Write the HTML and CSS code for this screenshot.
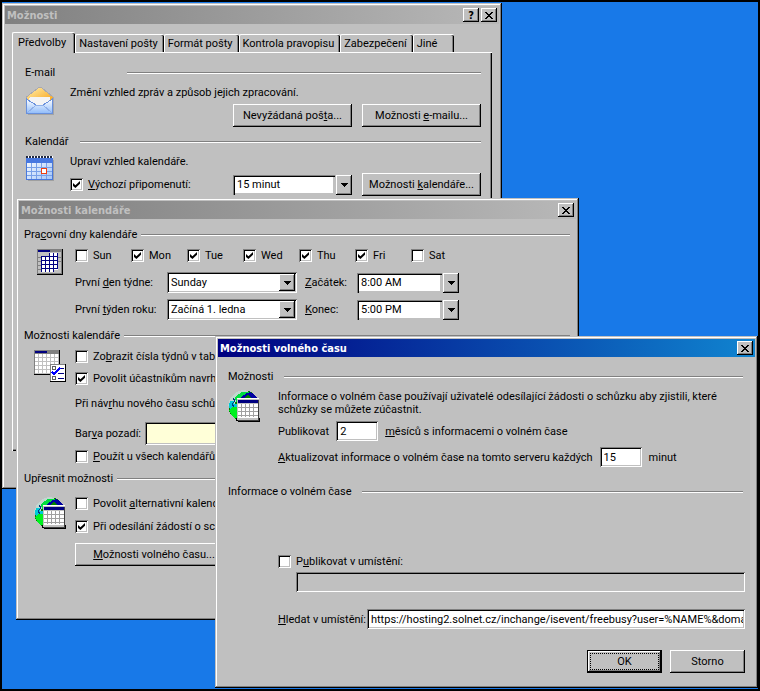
FILE: index.html
```
<!DOCTYPE html>
<html lang="cs">
<head>
<meta charset="utf-8">
<title>Možnosti volného času</title>
<link rel="stylesheet" href="styles.css">
</head>
<body>
<svg class="defs" aria-hidden="true">
  <symbol id="close" viewBox="0 0 8 7"><path d="M0 0h2v1h1v1h2v-1h1v-1h2v1h-1v1h-1v1h-1v1h1v1h1v1h1v1h-2v-1h-1v-1h-2v1h-1v1h-2v-1h1v-1h1v-1h1v-1h-1v-1h-1v-1h-1z"/></symbol>
  <symbol id="down" viewBox="0 0 7 4"><path d="M0 0h7v1h-1v1h-1v1h-1v1h-1v-1h-1v-1h-1v-1h-1z"/></symbol>
  <symbol id="globe" viewBox="0 0 32 32">
    <circle cx="16" cy="16" r="15.5" fill="#008000"/>
    <path d="M5 5Q10 0 17 0L28 6L24 10H9L4 18L0 16Q1 9 5 5z" fill="#c0d8d0"/>
    <path d="M7 7L14 2H22L16 8L8 12z" fill="#00e040"/>
    <path d="M12 8L19 3L22 2Q28 4 30 10H12z" fill="#0000a0"/>
    <path d="M17 7L20 4L24 9H15z" fill="#008000"/>
    <path d="M2 11H6V14H9V17H6L2 20L1 15z" fill="#00c8d8"/>
    <path d="M5 8L7 11L4 14L6 17" fill="none" stroke="#003880"/>
    <path d="M1 20L5 17H9V29L4 26L1 20z" fill="#00f020"/>
    <path d="M8 28h24v4h-22v-1h-2z" fill="#000"/>
    <path d="M9 8h21v20H9z" fill="#c0c0c0"/>
    <path d="M9 8h22v1H9z" fill="#fff"/>
    <path d="M10 10h20v3H10z" fill="#000080"/>
    <path d="M10 14h20v14H10z" fill="#fff"/>
    <path d="M13.500 14v13M17.500 14v13M21.500 14v13M25.500 14v13M10 17.500h20M10 21.500h20M10 25.500h20" stroke="#a0a0a0"/>
    <path d="M9 28h21v2H9z" fill="#c0c0c0"/><path d="M10 30h20V10h1v21H10z" fill="#404040"/>
  </symbol>
</svg>
<main class="desktop">

<section class="window options" aria-label="Možnosti">
  <header class="titlebar"><h1>Možnosti</h1>
    <button class="cap" type="button" aria-label="Nápověda">?</button>
    <button class="cap" type="button" aria-label="Zavřít"><svg width="8" height="7"><use href="#close"/></svg></button>
  </header>
  <nav class="tabs" role="tablist">
    <button type="button" role="tab" class="tab active" aria-selected="true">Předvolby</button>
    <button type="button" role="tab" class="tab">Nastavení pošty</button>
    <button type="button" role="tab" class="tab">Formát pošty</button>
    <button type="button" role="tab" class="tab">Kontrola pravopisu</button>
    <button type="button" role="tab" class="tab">Zabezpečení</button>
    <button type="button" role="tab" class="tab last">Jiné</button>
  </nav>
  <div class="panel">
    <h2 class="group wide">E-mail</h2>
    <div class="section">
      <svg class="icon" width="32" height="32" viewBox="0 0 32 32">
        <defs>
          <linearGradient id="flap" x1="0" y1="0" x2="1" y2="1"><stop offset="0" stop-color="#fff0b0"/><stop offset="1" stop-color="#f8a010"/></linearGradient>
          <linearGradient id="env" x1="0" y1="0" x2="0" y2="1"><stop offset="0" stop-color="#fff"/><stop offset="1" stop-color="#90bcfa"/></linearGradient>
        </defs>
        <path d="M3 12h26v17H3z" fill="#888" opacity=".5"/>
        <path d="M1.500 11L13 2q2-1 4 0l11 9v6H1.500z" fill="url(#flap)" stroke="#a8a8b0"/>
        <path d="M4 13q0-2 2-2h17q2 0 2 2v9H4z" fill="#f4f4f4"/>
        <path d="M1.500 13L11 19h7l9.500-6v14.500h-26z" fill="url(#env)" stroke="#6890dc"/>
        <path d="M2 27L11 19h7l9 8" fill="none" stroke="#90b0e8"/>
      </svg>
      <div>
        <p>Změní vzhled zpráv a způsob jejich zpracování.</p>
        <div class="line actions"><button class="btn" type="button">Nevyžádaná poš<u>t</u>a...</button><button class="btn" type="button">Možnosti <u>e</u>-mailu...</button></div>
      </div>
    </div>
    <h2 class="group">Kalendář</h2>
    <div class="section">
      <svg class="icon" width="32" height="26" viewBox="0 0 32 26">
        <defs><linearGradient id="sheet" x1="0" y1="0" x2="1" y2="1"><stop offset="0" stop-color="#fff"/><stop offset="1" stop-color="#a0c4f8"/></linearGradient></defs>
        <path d="M3 5h26v21H3z" fill="#888" opacity=".6"/>
        <path d="M1 3h27v22H1z" fill="url(#sheet)"/>
        <path d="M1 3h27v5H1z" fill="#4878e0"/>
        <path d="M1 2h27" stroke="#fff" stroke-width="2"/><path d="M1 2h27" stroke="#202840" stroke-dasharray="2 1" stroke-width="2"/>
        <path d="M6.500 8v16M11.500 8v16M16.500 8v16M21.500 8v16M1 12.500h26M1 16.500h26M1 20.500h26" stroke="#78a0e8"/>
        <path d="M1.500 8v16.500h26V4" fill="none" stroke="#4878dc"/>
        <path d="M16.500 13.500h5v5h-5z" fill="#fff" stroke="#f04010"/>
      </svg>
      <div>
        <p>Upraví vzhled kalendáře.</p>
        <div class="line reminder">
          <label class="check"><input type="checkbox" checked><span><u>V</u>ýchozí připomenutí:</span></label>
          <span class="combo split"><select aria-label="Výchozí připomenutí"><option>15 minut</option></select><i class="drop"><svg width="7" height="4"><use href="#down"/></svg></i></span>
          <button class="btn" type="button">Možnosti <u>k</u>alendáře...</button>
        </div>
      </div>
    </div>
  </div>
</section>

<section class="window calendar" aria-label="Možnosti kalendáře">
  <header class="titlebar"><h1>Možnosti kalendáře</h1>
    <button class="cap" type="button" aria-label="Zavřít"><svg width="8" height="7"><use href="#close"/></svg></button>
  </header>
  <div class="content">
    <h2 class="group"><span>Pra<u>c</u>ovní dny kalendáře</span></h2>
    <div class="section">
      <svg class="icon" width="26" height="26" viewBox="0 0 26 26">
        <path d="M0 0h26v26H0z" fill="#000"/><path d="M0 0h25v25H0z" fill="#808080"/><path d="M1 3h23v21H1z" fill="#c0c0c0"/>
        <path d="M1 1h12v2H1z" fill="#000080"/>
        <path d="M12 4h9v3h-9zM4 7h17v14H4zM4 20h13v3H4z" fill="#fff"/><path d="M1 8.500h3M1 12.500h3M1 16.500h3M1 20.500h3M21 8.500h4M21 12.500h4" stroke="#808080"/>
        <path d="M12.500 4v19M16.500 4v19M20.500 4v16M8.500 7v16M4.500 7v16M4 7.500h17M4 11.500h17M4 15.500h17M4 19.500h17" stroke="#000080"/>
      </svg>
      <div class="stack">
        <div class="line days">
          <label class="check"><input type="checkbox"><span>Sun</span></label>
          <label class="check"><input type="checkbox" checked><span>Mon</span></label>
          <label class="check"><input type="checkbox" checked><span>Tue</span></label>
          <label class="check"><input type="checkbox" checked><span>Wed</span></label>
          <label class="check"><input type="checkbox" checked><span>Thu</span></label>
          <label class="check"><input type="checkbox" checked><span>Fri</span></label>
          <label class="check"><input type="checkbox"><span>Sat</span></label>
        </div>
        <div class="times">
          <label for="first-day">První <u>d</u>en týdne:</label>
          <span class="combo"><select id="first-day"><option>Sunday</option></select><i class="drop"><svg width="7" height="4"><use href="#down"/></svg></i></span>
          <label for="start"><u>Z</u>ačátek:</label>
          <span class="combo split"><select id="start"><option>8:00 AM</option></select><i class="drop"><svg width="7" height="4"><use href="#down"/></svg></i></span>
          <label for="first-week">První <u>t</u>ýden roku:</label>
          <span class="combo"><select id="first-week"><option>Začíná 1. ledna</option></select><i class="drop"><svg width="7" height="4"><use href="#down"/></svg></i></span>
          <label for="end"><u>K</u>onec:</label>
          <span class="combo split"><select id="end"><option>5:00 PM</option></select><i class="drop"><svg width="7" height="4"><use href="#down"/></svg></i></span>
        </div>
      </div>
    </div>
    <h2 class="group">Možnosti kalendáře</h2>
    <div class="section">
      <svg class="icon outset" width="32" height="32" viewBox="0 0 32 32">
        <path d="M0 0h26v25H0z" fill="#000"/><path d="M0 0h25v24H0z" fill="#808080"/><path d="M1 4h24v20H1z" fill="#fff"/><path d="M1 1h12v2H1z" fill="#000080"/>
        <path d="M4.500 4v20M8.500 4v20M12.500 4v20M16.500 4v20M20.500 4v20M24.500 4v20M1 7.500h24M1 11.500h24M1 15.500h24M1 19.500h24M1 23.500h24" stroke="#c0c0c0"/>
        <path d="M16 14h16v18H16z" fill="#000"/><path d="M16 14h15v17H16z" fill="#808080"/><path d="M17 15h14v16H17z" fill="#fff"/>
        <path d="M18.500 16.500h3v3h-3zM18.500 26.500h3v3h-3z" fill="#fff" stroke="#606060"/>
        <path d="M24 18.500h6M24 23.500h6M24 28.500h6" stroke="#000080" stroke-width="1.500"/>
        <path d="M18 22l2 2l6-6" fill="none" stroke="#0000ff" stroke-width="2"/>
      </svg>
      <div class="stack">
        <label class="check"><input type="checkbox"><span>Zo<u>b</u>razit čísla týdnů v tabu</span></label>
        <label class="check"><input type="checkbox" checked><span>Povolit účastníkům navrhn</span></label>
        <p class="proposal">Při náv<u>r</u>hu nového času schůz</p>
        <div class="line swatch-line"><span>Bar<u>v</u>a pozadí:</span><button type="button" class="swatch" aria-label="Barva pozadí"></button></div>
        <label class="check tight"><input type="checkbox"><span><u>P</u>oužít u všech kalendářů</span></label>
      </div>
    </div>
    <h2 class="group">Upřesnit možnosti</h2>
    <div class="section advanced">
      <svg class="icon outset" width="32" height="32"><use href="#globe"/></svg>
      <div class="stack">
        <label class="check"><input type="checkbox"><span>Povolit <u>a</u>lternativní kalend</span></label>
        <label class="check"><input type="checkbox" checked><span>Při odesílání žádostí o schů</span></label>
        <button class="btn freebusy" type="button"><u>M</u>ožnosti volného času...</button>
      </div>
    </div>
  </div>
</section>

<section class="window availability" aria-label="Možnosti volného času">
  <header class="titlebar"><h1>Možnosti volného času</h1>
    <button class="cap" type="button" aria-label="Zavřít"><svg width="8" height="7"><use href="#close"/></svg></button>
  </header>
  <form class="content">
    <h2 class="group">Možnosti</h2>
    <div class="section">
      <svg class="icon" width="32" height="32"><use href="#globe"/></svg>
      <div>
        <p>Informace o volném čase používají uživatelé odesílající žádosti o schůzku aby zjistili, které schůzky se můžete zúčastnit.</p>
        <div class="line field-line"><span>Publikovat</span><input class="field short" id="months" value="2"><label for="months"><u>m</u>ěsíců s informacemi o volném čase</label></div>
        <div class="line field-line"><label for="refresh"><u>A</u>ktualizovat informace o volném čase na tomto serveru každých</label><input class="field short" id="refresh" value="15"><span>minut</span></div>
      </div>
    </div>
    <h2 class="group">Informace o volném čase</h2>
    <div class="publish">
      <label class="check"><input type="checkbox"><span>P<u>u</u>blikovat v umístění:</span></label>
      <input class="field location" aria-label="Publikovat v umístění" disabled>
      <div class="line search"><label for="search"><u>H</u>ledat v umístění:</label><input class="field" id="search" value="https://hosting2.solnet.cz/inchange/isevent/freebusy?user=%NAME%&amp;domain=%DOMAIN%"></div>
      <div class="line buttons"><button class="btn default" type="button">OK</button><button class="btn" type="button">Storno</button></div>
    </div>
  </form>
</section>
</main>
</body>
</html>
```
FILE: styles.css
```
* { box-sizing: border-box; }

body, button, input, select {
  font: 11px/13px Roboto, Tahoma, "Noto Sans", sans-serif;
  color: #000;
}
body { margin: 0; }
h1, h2, p { margin: 0; font-size: 11px; font-weight: normal; }
button, select { padding: 0; }
svg { display: block; fill: #000; }
.defs { position: absolute; width: 0; height: 0; }

.desktop {
  position: relative;
  min-height: 100vh;
  border: 2px solid #000;
  background: #1879e8;
  overflow: hidden;
}

/* windows */
.window {
  position: absolute;
  padding: 3px;
  background: #c0c0c0;
  box-shadow: inset -1px -1px #000, inset 1px 1px #c0c0c0, inset -2px -2px #808080, inset 2px 2px #fff;
}
.options { left: 0; top: 1px; width: 500px; min-height: 486px; }
.calendar { left: 14px; top: 196px; width: 563px; min-height: 422px; }
.availability { left: 213px; right: 0; top: 334px; min-height: 352px; }

.titlebar {
  display: flex;
  align-items: center;
  height: 18px;
  padding: 0 2px;
  color: #c0c0c0;
  background: linear-gradient(90deg, #808080, #b8b8b8);
}
.availability .titlebar { color: #fff; background: linear-gradient(90deg, #000080, #1084d0); }
.titlebar h1, .cap { font-family: "DejaVu Sans Condensed", Tahoma, sans-serif; font-weight: bold; }
.titlebar h1 { flex: 1; }
.cap {
  display: grid;
  place-items: center;
  width: 16px;
  height: 14px;
  margin-left: 2px;
}

.cap, .drop, .btn {
  border: 0;
  background: #c0c0c0;
  box-shadow: inset -1px -1px #000, inset 1px 1px #fff, inset -2px -2px #808080;
}
.btn { min-width: 119px; height: 23px; text-align: center; white-space: nowrap; }

/* tabs */
.tabs { display: flex; align-items: flex-end; padding: 8px 7px 0; }
.tab {
  height: 18px;
  padding: 0 6px 0 3px;
  border: solid #fff;
  border-width: 1px 0 0 1px;
  border-radius: 2px 2px 0 0;
  background: #c0c0c0;
  box-shadow: inset -1px 0 #000, inset -2px 0 #808080;
}
.tab.active { height: 21px; margin-bottom: -1px; padding: 0 9px 2px 5px; }
.tab.last { padding-right: 17px; }
.panel {
  min-height: 399px;
  margin: 0 7px;
  padding: 13px 11px 0 12px;
  border: solid #fff;
  border-width: 1px 0 0 1px;
  box-shadow: inset -1px -1px #000, inset -2px -2px #808080;
}

/* groups */
.group { display: flex; align-items: center; gap: 4px; white-space: nowrap; }
.group::after { content: ""; flex: 1; height: 2px; background: linear-gradient(#808080 50%, #fff 50%); }
.section { display: grid; grid-template-columns: 45px 1fr; margin: 7px 0 8px; }
.icon { shape-rendering: crispEdges; }
.line { display: flex; align-items: center; }
.panel .group { gap: 12px; }
.panel .wide { gap: 72px; }
.actions, .reminder { gap: 10px; margin-top: 5px; }
.actions { justify-content: flex-end; }
.reminder .check { flex: 1; }
.reminder .combo { width: 119px; }

/* form controls */
.check { display: flex; align-items: center; gap: 5px; height: 13px; white-space: nowrap; }
input[type="checkbox"] {
  appearance: none;
  flex: none;
  display: grid;
  place-items: center;
  width: 13px;
  height: 13px;
  margin: 0;
  background: #fff;
  box-shadow: inset 1px 1px #808080, inset -1px -1px #fff, inset 2px 2px #000, inset -2px -2px #c0c0c0;
}
input[type="checkbox"]:checked::after {
  content: "";
  width: 7px;
  height: 7px;
  background: #000;
  clip-path: polygon(0 30%, 35% 60%, 100% 0, 100% 40%, 35% 100%, 0 70%);
}
.field, .combo, .swatch {
  border: 0;
  background: #fff;
  box-shadow: inset 1px 1px #808080, inset -1px -1px #fff, inset 2px 2px #000, inset -2px -2px #c0c0c0;
}
.field { height: 20px; min-width: 0; padding: 0 2px 0 4px; }
.field:disabled { background: #c0c0c0; box-shadow: inset 1px 1px #808080, inset -1px -1px #fff, inset 2px 2px #000; }
.short { width: 42px; }
.combo { display: flex; height: 21px; padding: 2px; }
.combo select { appearance: none; flex: 1; min-width: 0; padding: 0 2px; border: 0; background: none; }
.drop { display: grid; place-items: center; width: 16px; pointer-events: none; }
.split { height: 20px; padding: 0; background: none; box-shadow: none; }
.split .drop { margin-left: 1px; }
.split select {
  padding: 0 4px;
  background: #fff;
  box-shadow: inset 1px 1px #808080, inset 2px 2px #000, inset -2px -2px #c0c0c0;
}

/* calendar options */
.calendar .content { padding: 9px 6px 0 5px; }
.calendar .section { grid-template-columns: 38px 1fr; margin: 8px 0 9px; padding-left: 13px; }
.calendar .outset { margin-left: -3px; }
.stack { display: flex; flex-direction: column; align-items: flex-start; gap: 9px; }
.days .check { width: 56px; }
.times { display: grid; grid-template-columns: 92px 138px 52px 102px; row-gap: 6px; align-items: center; margin-top: 1px; }
.times .combo:not(.split) { margin-right: 8px; }
.proposal { margin-top: 3px; white-space: nowrap; }
.swatch-line { gap: 4px; margin-top: 3px; }
.swatch { width: 130px; height: 23px; background: #ffffd8; }
.stack .tight { margin-top: -4px; }
.calendar .advanced { margin-top: 12px; }
.advanced .stack { gap: 10px; }
.freebusy { width: 158px; }

/* free/busy options */
.availability .content { padding: 13px 10px 11px; }
.availability .group { gap: 10px; padding-right: 2px; }
.availability .section { grid-template-columns: 50px 1fr; margin: 7px 0 18px; }
.availability p { padding-right: 24px; }
.field-line { gap: 7px; margin-top: 5px; }
.field-line + .field-line { margin-top: 6px; }
.publish { margin-top: 57px; padding-left: 50px; }
.location { display: block; width: calc(100% - 18px); margin: 4px 0 0 18px; }
.search { gap: 1px; margin-top: 17px; white-space: nowrap; }
.search .field { flex: 1; }
.buttons { justify-content: flex-end; gap: 8px; margin-top: 21px; }
.buttons .btn { min-width: 75px; }
.default { outline: 1px dotted #000; outline-offset: -4px; border: 1px solid #000; }
```
